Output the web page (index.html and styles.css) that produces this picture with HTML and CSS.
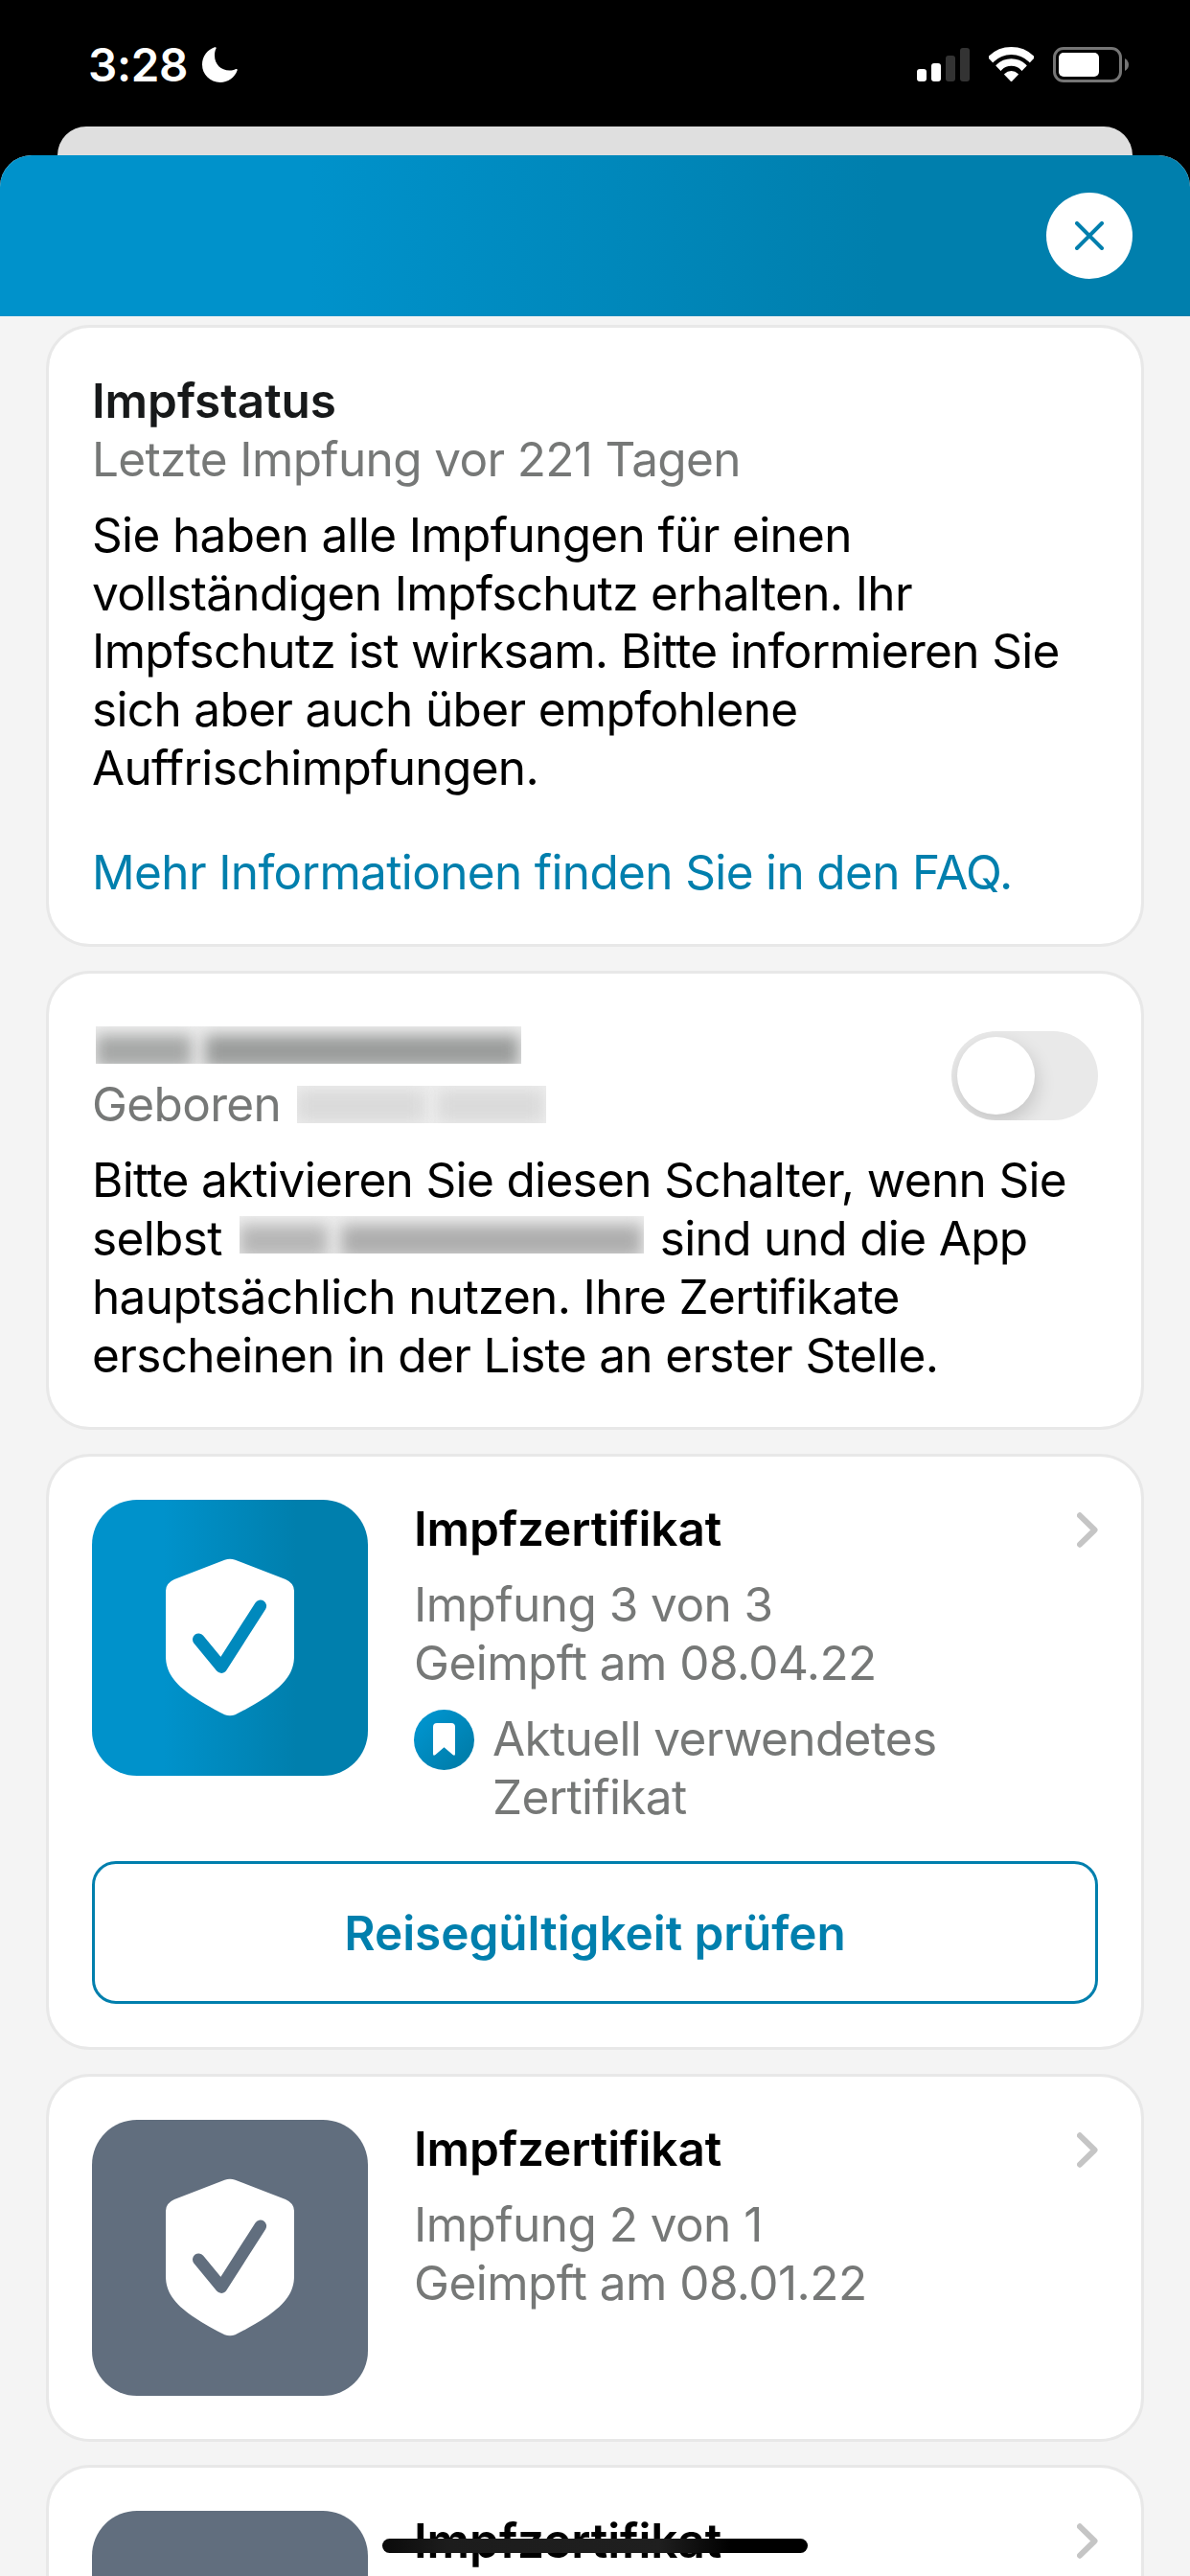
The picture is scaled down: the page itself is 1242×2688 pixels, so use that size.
FILE: index.html
```html
<!DOCTYPE html>
<html lang="de">
<head>
<meta charset="utf-8">
<title>Impfzertifikate</title>
<link rel="stylesheet" href="styles.css">
</head>
<body>
<svg class="defs" aria-hidden="true">
  <defs>
    <symbol id="shield" viewBox="0 0 288 288">
      <path fill="#fff" d="M138.500 62.800Q144 60.600 149.500 62.800L202 83Q211 87 211 95V163C211 180 202 191.500 183 205C171 213 160 219 149.500 224.300Q144 226 138.500 224.300C128 219 117 213 105 205C86 191.500 77 180 77 163V95Q77 87 86 83Z"/>
      <path fill="none" stroke="currentColor" stroke-width="12.600" stroke-linecap="round" stroke-linejoin="round" d="M111.300 145.700L135 174.600L175.800 110.800"/>
    </symbol>
    <symbol id="chevron" viewBox="0 0 22 37">
      <path fill="none" stroke="#c5c5c5" stroke-width="6" stroke-linecap="round" stroke-linejoin="round" d="M3 3.300L18.500 18.500L3 33.700"/>
    </symbol>
    <clipPath id="wedge"><path d="M23.500 36.500L-3 9V-6H50V9Z"/></clipPath>
  </defs>
</svg>
<div class="screen">
  <div class="status-bar">
    <div class="clock">
      <span>3:28</span>
      <svg class="moon" viewBox="0 0 37 37"><path fill="#fff" d="M13 .3Q15 -.3 14.600 1.600C13.300 4 13 6.500 13 9C13 18 19.500 24.500 28.500 24.500C31 24.500 33 24 35.200 23Q37.200 22.600 36.600 24.600C34 32 27 37 18.800 37C8.500 37 0 29 0 18.300C0 10 5.500 2.800 13 .3Z"/></svg>
    </div>
    <div class="indicators">
      <svg class="signal" viewBox="0 0 55 35" fill="#fff"><rect y="22" width="10" height="13" rx="3"/><rect x="15" y="16" width="10" height="19" rx="3"/><g fill="#333"><rect x="30" y="8" width="10" height="27" rx="3"/><rect x="45" width="10" height="35" rx="3"/></g></svg>
      <svg class="wifi" viewBox="0 0 47 36"><g clip-path="url(#wedge)"><circle cx="23.500" cy="34" r="30" fill="none" stroke="#fff" stroke-width="8"/><circle cx="23.500" cy="34" r="18" fill="none" stroke="#fff" stroke-width="7.600"/><circle cx="23.500" cy="35" r="10" fill="#fff"/></g></svg>
      <svg class="battery" viewBox="0 0 80 37"><rect x="1.500" y="1.500" width="69" height="34" rx="9.500" fill="none" stroke="#757575" stroke-width="3"/><rect x="6" y="6" width="42" height="25" rx="5" fill="#fff"/><path fill="#757575" d="M75 12Q79 14.500 79 18.500T75 25Z"/></svg>
    </div>
  </div>
  <div class="back-sheet"></div>
  <div class="sheet">
    <header class="sheet-header">
      <button class="close" aria-label="Schließen"><svg viewBox="0 0 30 30"><path fill="none" stroke="#007fad" stroke-width="4" stroke-linecap="round" d="M2 2L28 28M28 2L2 28"/></svg></button>
    </header>
    <main class="cards">
      <section class="card card-text">
        <h2 class="title title-soft">Impfstatus</h2>
        <p class="muted">Letzte Impfung vor 221 Tagen</p>
        <p class="copy">Sie haben alle Impfungen für einen<br>vollständigen Impfschutz erhalten. Ihr<br>Impfschutz ist wirksam. Bitte informieren Sie<br>sich aber auch über empfohlene<br>Auffrischimpfungen.</p>
        <a class="link">Mehr Informationen finden Sie in den FAQ.</a>
      </section>

      <section class="card card-text">
        <div class="person">
          <div class="person-data">
            <div class="line"><span class="redacted redacted-name"><i></i><i></i></span></div>
            <div class="line muted">Geboren<span class="redacted redacted-date"><i></i><i></i></span></div>
          </div>
          <span class="switch"><span class="knob"></span></span>
        </div>
        <p class="copy">Bitte aktivieren Sie diesen Schalter, wenn Sie<br>selbst<span class="redacted redacted-inline"><i></i><i></i></span>sind und die App<br>hauptsächlich nutzen. Ihre Zertifikate<br>erscheinen in der Liste an erster Stelle.</p>
      </section>

      <section class="card">
        <div class="cert">
          <svg class="tile tile-current"><use href="#shield"/></svg>
          <div class="cert-text">
            <h2 class="title">Impfzertifikat</h2>
            <p class="muted details">Impfung 3 von 3<br>Geimpft am 08.04.22</p>
            <div class="in-use">
              <span class="badge"><svg viewBox="0 0 23 34"><path fill="#fff" d="M4 0H19Q23 0 23 4V32Q23 35 20.500 33L11.500 25.200L2.500 33Q0 35 0 32V4Q0 0 4 0Z"/></svg></span>
              <p class="muted">Aktuell verwendetes<br>Zertifikat</p>
            </div>
          </div>
          <svg class="chevron"><use href="#chevron"/></svg>
        </div>
        <button class="action">Reisegültigkeit prüfen</button>
      </section>

      <section class="card">
        <div class="cert">
          <svg class="tile"><use href="#shield"/></svg>
          <div class="cert-text">
            <h2 class="title">Impfzertifikat</h2>
            <p class="muted details">Impfung 2 von 1<br>Geimpft am 08.01.22</p>
          </div>
          <svg class="chevron"><use href="#chevron"/></svg>
        </div>
      </section>

      <section class="card">
        <div class="cert">
          <div class="tile"></div>
          <div class="cert-text">
            <h2 class="title">Impfzertifikat</h2>
          </div>
          <svg class="chevron"><use href="#chevron"/></svg>
        </div>
      </section>
    </main>
  </div>
  <div class="home-indicator"></div>
</div>
</body>
</html>
```

FILE: styles.css
```css
* { box-sizing: border-box; }

body {
  margin: 0;
  background: #000;
  color: #000;
  font: 400 49.5px/60.9px "Inter", "Liberation Sans", sans-serif;
  letter-spacing: -0.65px;
}

h2, p { margin: 0; }

.defs { position: absolute; width: 0; height: 0; }

.screen {
  position: relative;
  display: flex;
  flex-direction: column;
  width: 1242px;
  height: 2688px;
  overflow: hidden;
}

/* Status bar */
.status-bar {
  flex: none;
  display: flex;
  justify-content: space-between;
  align-items: flex-start;
  height: 132px;
  padding: 49px 63px 0 92px;
}

.clock { display: flex; align-items: flex-start; }

.clock span {
  width: 119px;
  color: #fff;
  font-size: 47.5px;
  font-weight: 600;
  line-height: 38px;
  letter-spacing: -0.3px;
}

.moon { width: 37px; height: 37px; }
.indicators { display: flex; }
.signal { width: 55px; height: 35px; margin: 1px 20px 0 0; }
.wifi { width: 47px; height: 36px; margin-right: 20px; }
.battery { width: 80px; height: 37px; }

/* Stacked sheets */
.back-sheet {
  flex: none;
  height: 30px;
  margin: 0 60px;
  border-radius: 30px 30px 0 0;
  background: #dfdfdf;
}

.sheet {
  flex: 1;
  min-height: 0;
  overflow: hidden;
  border-radius: 33px 33px 0 0;
  background: #f4f4f4;
}

.sheet-header {
  display: flex;
  justify-content: flex-end;
  height: 168px;
  padding: 39px 60px 0;
  background: linear-gradient(90deg, #0092cb 26%, #007fad 74%);
}

.close {
  display: grid;
  place-items: center;
  width: 90px;
  height: 90px;
  padding: 0;
  border: 0;
  border-radius: 50%;
  background: #fff;
}

.close svg { width: 30px; height: 30px; }

/* Cards */
.cards {
  display: flex;
  flex-direction: column;
  gap: 24.5px;
  padding: 9px 48px 0;
}

.card {
  padding: 45px;
  border: 3px solid #e8e8e8;
  border-radius: 46px;
  background: #fff;
}

.card-text { padding: 45.8px 45px 44.2px; }

.title {
  font-size: inherit;
  font-weight: 600;
  letter-spacing: -0.08px;
}

.title-soft { color: #17191a; }
.muted { color: #767877; }

.copy {
  margin-top: 18px;
  white-space: nowrap;
}

.link {
  display: block;
  margin-top: 48px;
  color: #007fad;
}

/* Person card */
.person { display: flex; justify-content: space-between; }
.line { display: flex; height: 60.9px; }

.redacted {
  display: inline-flex;
  gap: 14px;
  height: 39px;
  overflow: hidden;
  background: #eee;
}

.redacted i {
  flex: none;
  height: 34px;
  margin-top: 9px;
  background: #9a9c9b;
  filter: blur(8px);
}

.redacted-name { width: 444px; margin: 9px 0 0 4px; }
.redacted-name i:first-child { width: 100px; opacity: .85; }
.redacted-name i:last-child { width: 328px; }

.redacted-date { width: 260px; margin: 11px 0 0 17px; }
.redacted-date i { margin-top: 4px; background: #dadada; }
.redacted-date i:first-child { width: 133px; }
.redacted-date i:last-child { width: 110px; }

.redacted-inline { width: 422px; margin: 0 17px 0 18px; vertical-align: 2px; }
.redacted-inline i { background: #adadad; }
.redacted-inline i:first-child { width: 92px; opacity: .85; }
.redacted-inline i:last-child { width: 314px; }

.switch {
  width: 153px;
  height: 93px;
  margin-top: 14.5px;
  padding: 6px;
  overflow: hidden;
  border-radius: 47px;
  background: #e9e9e9;
}

.knob {
  display: block;
  width: 81px;
  height: 81px;
  border-radius: 50%;
  background: #fff;
  box-shadow: 2px 8px 20px rgba(0, 0, 0, .16);
}

/* Certificate cards */
.cert { display: flex; align-items: flex-start; }

.tile {
  flex: none;
  width: 288px;
  height: 288px;
  border-radius: 47px;
  background: #616e7e;
  color: #616e7e;
}

.tile-current {
  background: linear-gradient(90deg, #0092cb 26%, #007fad 74%);
  color: #0089bd;
}

.cert-text { flex: 1; margin-left: 48px; padding-top: .6px; }

.details {
  margin-top: 18px;
  letter-spacing: -0.55px;
}

.in-use {
  display: flex;
  gap: 19px;
  margin-top: 18px;
}

.badge {
  display: grid;
  place-items: center;
  flex: none;
  width: 63px;
  height: 63px;
  border-radius: 50%;
  background: linear-gradient(135deg, #0092cb 20%, #007fad 80%);
}

.badge svg { width: 23px; height: 34px; }

.chevron {
  flex: none;
  width: 22px;
  height: 37px;
  margin-top: 13px;
}

.action {
  display: block;
  width: 100%;
  height: 149.5px;
  margin-top: 36px;
  padding: 1px 0 0;
  border: 3px solid #007fad;
  border-radius: 25px;
  background: #fff;
  color: #007fad;
  font: inherit;
  font-weight: 600;
  letter-spacing: -0.05px;
}

.home-indicator {
  position: absolute;
  left: 399px;
  bottom: 24px;
  width: 444px;
  height: 15px;
  border-radius: 8px;
  background: linear-gradient(90deg, #0a0a0a, #1c1c1c 15%, #1f1f1f 65%, #000 82%);
}
```
